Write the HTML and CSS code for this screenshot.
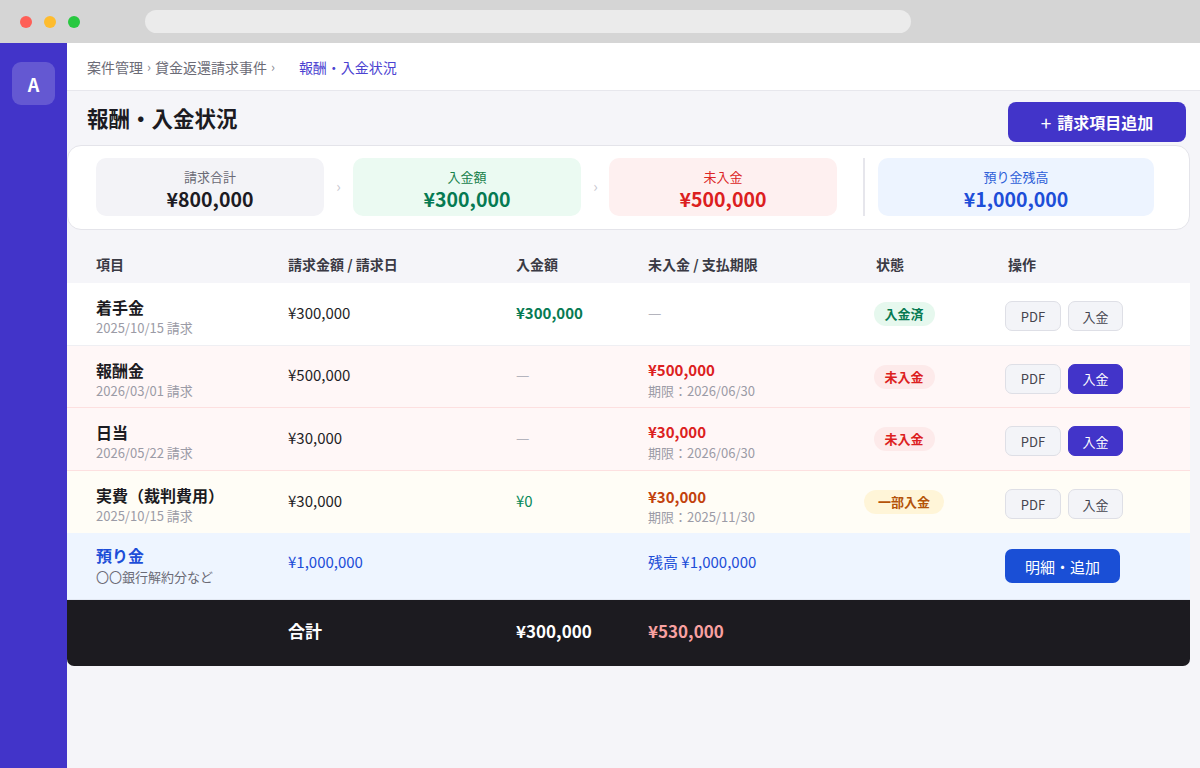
FILE: index.html
```html
<!DOCTYPE html>
<html lang="ja">
<head>
  <meta charset="UTF-8">
  <meta name="viewport" content="width=device-width, initial-scale=1.0">
  <title>報酬・入金状況</title>
  <link rel="stylesheet" href="styles.css">
</head>
<body>

<div class="window">
  <div class="chrome">
    <span class="dot red"></span>
    <span class="dot yellow"></span>
    <span class="dot green"></span>
    <div class="address"></div>
  </div>

  <div class="app">
    <aside class="sidebar">
      <div class="avatar">A</div>
    </aside>

    <main class="main">
      <nav class="crumbs">
        <span>案件管理</span><span class="sep">›</span>
        <span>貸金返還請求事件</span><span class="sep">›</span>
        <span class="current">報酬・入金状況</span>
      </nav>

      <div class="content">
        <div class="title-row">
          <h1>報酬・入金状況</h1>
          <button class="btn-add"><span class="plus">+</span>請求項目追加</button>
        </div>

        <div class="summary">
          <div class="tile gray">
            <div class="tile-label">請求合計</div>
            <div class="tile-value">¥800,000</div>
          </div>
          <div class="chev">›</div>
          <div class="tile green">
            <div class="tile-label">入金額</div>
            <div class="tile-value">¥300,000</div>
          </div>
          <div class="chev">›</div>
          <div class="tile red">
            <div class="tile-label">未入金</div>
            <div class="tile-value">¥500,000</div>
          </div>
          <div class="divider"></div>
          <div class="tile blue wide">
            <div class="tile-label">預り金残高</div>
            <div class="tile-value">¥1,000,000</div>
          </div>
        </div>

        <div class="table">
          <div class="tr th">
            <div>項目</div>
            <div>請求金額 / 請求日</div>
            <div>入金額</div>
            <div>未入金 / 支払期限</div>
            <div>状態</div>
            <div>操作</div>
          </div>

          <div class="tr paid">
            <div class="two">
              <div class="name">着手金</div>
              <div class="sub">2025/10/15 請求</div>
            </div>
            <div class="amt">¥300,000</div>
            <div class="amt ok-bold">¥300,000</div>
            <div class="amt dash">—</div>
            <div class="status"><span class="badge b-paid">入金済</span></div>
            <div class="actions">
              <button class="btn pdf">PDF</button>
              <button class="btn">入金</button>
            </div>
          </div>

          <div class="tr unpaid">
            <div class="two">
              <div class="name">報酬金</div>
              <div class="sub">2026/03/01 請求</div>
            </div>
            <div class="amt">¥500,000</div>
            <div class="amt dash">—</div>
            <div class="two">
              <div class="due red-txt">¥500,000</div>
              <div class="sub">期限：2026/06/30</div>
            </div>
            <div class="status"><span class="badge b-unpaid">未入金</span></div>
            <div class="actions">
              <button class="btn pdf">PDF</button>
              <button class="btn primary">入金</button>
            </div>
          </div>

          <div class="tr unpaid">
            <div class="two">
              <div class="name">日当</div>
              <div class="sub">2026/05/22 請求</div>
            </div>
            <div class="amt">¥30,000</div>
            <div class="amt dash">—</div>
            <div class="two">
              <div class="due red-txt">¥30,000</div>
              <div class="sub">期限：2026/06/30</div>
            </div>
            <div class="status"><span class="badge b-unpaid">未入金</span></div>
            <div class="actions">
              <button class="btn pdf">PDF</button>
              <button class="btn primary">入金</button>
            </div>
          </div>

          <div class="tr partial">
            <div class="two">
              <div class="name">実費（裁判費用）</div>
              <div class="sub">2025/10/15 請求</div>
            </div>
            <div class="amt">¥30,000</div>
            <div class="amt ok">¥0</div>
            <div class="two">
              <div class="due orange-txt">¥30,000</div>
              <div class="sub tight">期限：2025/11/30</div>
            </div>
            <div class="status"><span class="badge b-partial">一部入金</span></div>
            <div class="actions">
              <button class="btn pdf">PDF</button>
              <button class="btn">入金</button>
            </div>
          </div>

          <div class="tr deposit">
            <div class="two">
              <div class="name blue-txt">預り金</div>
              <div class="sub dark">〇〇銀行解約分など</div>
            </div>
            <div class="amt blue-txt">¥1,000,000</div>
            <div></div>
            <div class="amt blue-txt">残高 ¥1,000,000</div>
            <div></div>
            <div class="actions">
              <button class="btn-blue">明細・追加</button>
            </div>
          </div>

          <div class="tr total">
            <div></div>
            <div>合計</div>
            <div>¥300,000</div>
            <div class="pink-txt">¥530,000</div>
            <div></div>
            <div></div>
          </div>
        </div>
      </div>
    </main>
  </div>
</div>

</body>
</html>
```

FILE: styles.css
```css
* {
  box-sizing: border-box;
}
body {
  margin: 0;
  font-family: "Noto Sans CJK JP", "Noto Sans", sans-serif;
  color: #1c1b22;
  background: #f5f5f9;
}
button {
  font-family: inherit;
  cursor: pointer;
}

.window {
  width: 1200px;
  height: 768px;
  display: flex;
  flex-direction: column;
  overflow: hidden;
}

/* browser bar */
.chrome {
  height: 43px;
  background: #d5d5d5;
  display: flex;
  align-items: center;
  padding-left: 20px;
  flex-shrink: 0;
}
.dot {
  width: 12px;
  height: 12px;
  border-radius: 50%;
  margin-right: 12px;
}
.dot.red { background: #fe5f57; }
.dot.yellow { background: #febc2e; }
.dot.green { background: #28c840; }
.address {
  margin-left: 53px;
  width: 766px;
  height: 23px;
  border-radius: 12px;
  background: #ebebeb;
}

.app {
  flex: 1;
  display: flex;
}

.sidebar {
  width: 67px;
  background: #4234c9;
  padding: 19px 0 0 12px;
  flex-shrink: 0;
}
.avatar {
  width: 43px;
  height: 43px;
  border-radius: 9px;
  background: rgba(255, 255, 255, 0.18);
  color: #fff;
  font-weight: 700;
  font-size: 18px;
  display: flex;
  align-items: center;
  justify-content: center;
}

.main {
  flex: 1;
  background: #f5f5f9;
}

.crumbs {
  height: 48px;
  background: #fff;
  border-bottom: 1px solid #e7e7ed;
  display: flex;
  align-items: center;
  padding-left: 20px;
  font-size: 14px;
  color: #6b6b76;
}
.crumbs .sep {
  color: #8a8a94;
  margin: 0 4px;
  font-size: 13px;
}
.crumbs .current {
  color: #4b42d1;
  margin-left: 20px;
}

.content {
  padding-right: 10px;
}

.title-row {
  margin-top: 11px;
  height: 40px;
  display: flex;
  justify-content: space-between;
  align-items: flex-start;
  padding: 0 4px 0 20px;
}
.title-row h1 {
  margin: 0;
  font-size: 21.5px;
  line-height: 32px;
  font-weight: 700;
  color: #1c1b22;
}
.btn-add {
  height: 40px;
  width: 178px;
  border: none;
  border-radius: 8px;
  background: #4234c9;
  color: #fff;
  font-size: 16px;
  font-weight: 700;
  display: flex;
  align-items: center;
  justify-content: center;
}
.btn-add .plus {
  font-weight: 400;
  font-size: 19px;
  margin-right: 6px;
  line-height: 1;
}

/* summary */
.summary {
  margin-top: 3px;
  background: #fff;
  border: 1px solid #e4e4ea;
  border-radius: 14px;
  padding: 12px 0 13px 28px;
  display: flex;
  align-items: center;
}
.tile {
  width: 228px;
  height: 58px;
  border-radius: 10px;
  text-align: center;
  padding-top: 10px;
}
.tile.wide {
  width: 276px;
}
.tile-label {
  font-size: 13px;
  line-height: 18px;
}
.tile-value {
  font-size: 19.5px;
  line-height: 26px;
  font-weight: 700;
}
.tile.gray { background: #f3f3f7; }
.tile.gray .tile-label { color: #6b6b76; }
.tile.gray .tile-value { color: #1c1b22; }
.tile.green { background: #ebfaf2; }
.tile.green .tile-label { color: #16804a; }
.tile.green .tile-value { color: #067a52; }
.tile.red { background: #fef0f0; }
.tile.red .tile-label { color: #dc2626; }
.tile.red .tile-value { color: #dc2020; }
.tile.blue { background: #edf4ff; }
.tile.blue .tile-label { color: #2d5fd8; }
.tile.blue .tile-value { color: #1d4ed8; }
.chev {
  width: 29px;
  text-align: center;
  color: #c8c8d0;
  font-size: 15px;
  padding-bottom: 4px;
}
.chev + .tile.red {
  margin-left: -1px;
}
.divider {
  width: 2px;
  height: 58px;
  background: #e6e6ec;
  margin: 0 13px 0 26px;
}

/* table */
.table {
  margin-top: 15px;
}
.tr {
  display: grid;
  grid-template-columns: 192px 228px 132px 228px 132px 1fr;
  align-items: center;
  padding-left: 29px;
  height: 62px;
  border-bottom: 1px solid #efeff3;
  font-size: 15px;
}
.tr.th {
  height: 38px;
  border-bottom: none;
  font-size: 14px;
  font-weight: 700;
  color: #3a3a44;
}
.tr.paid {
  background: #fff;
  height: 63px;
}
.tr.unpaid {
  background: #fff7f7;
  border-bottom-color: #fde0e0;
}
.tr.unpaid + .tr.unpaid {
  height: 63px;
}
.tr.partial {
  background: #fffdf6;
  border-bottom: none;
}
.tr.deposit {
  background: #eef5ff;
  height: 67px;
  border-bottom: 1px solid #e2e8f2;
}
.tr.total {
  background: #1c1b20;
  color: #fff;
  height: 66px;
  border-bottom: none;
  border-radius: 0 0 7px 7px;
  font-size: 17px;
  font-weight: 700;
  padding-bottom: 6px;
}

.two {
  padding-top: 6px;
}
.name {
  font-size: 16px;
  line-height: 22px;
  font-weight: 700;
  color: #1c1b22;
}
.sub {
  font-size: 13px;
  line-height: 20px;
  color: #9b9ba6;
}
.sub.tight {
  line-height: 17px;
}
.sub.dark {
  color: #6b6b76;
  line-height: 22px;
}
.due {
  font-size: 15px;
  line-height: 22px;
  font-weight: 700;
}
.amt {
  color: #1f1f27;
  padding-bottom: 4px;
}
.deposit .two {
  padding-top: 0;
}
.deposit .amt {
  padding-bottom: 10px;
}
.dash {
  color: #b4b4bd;
}
.ok-bold {
  color: #067a52;
  font-weight: 700;
}
.ok {
  color: #0a8a5a;
}
.red-txt { color: #dc2020; }
.orange-txt { color: #c2410c; }
.blue-txt { color: #1d4ed8; }
.pink-txt { color: #f8a1a1; }

.status {
  width: 56px;
  display: flex;
  justify-content: center;
}
.badge {
  flex-shrink: 0;
  height: 24px;
  line-height: 24px;
  padding: 0 11px;
  border-radius: 12px;
  font-size: 13px;
  font-weight: 700;
  white-space: nowrap;
}
.b-paid { background: #e6f8ee; color: #067a52; }
.b-unpaid { background: #fdeaea; color: #dc2020; }
.b-partial { background: #fff5d8; color: #b45309; padding: 0 14px; }

.actions {
  display: flex;
  gap: 7px;
  margin-left: -3px;
  margin-top: 4px;
}
.deposit .actions {
  margin-top: 0;
}
.btn {
  height: 30px;
  width: 55px;
  padding: 0;
  border: 1px solid #dedfe6;
  border-radius: 7px;
  background: #f3f4f8;
  color: #45454f;
  font-size: 13px;
}
.btn.pdf {
  width: 56px;
}
.btn.primary {
  background: #4234c9;
  border-color: #4234c9;
  color: #fff;
}
.btn-blue {
  height: 34px;
  padding: 0 20px;
  border: none;
  border-radius: 7px;
  background: #1a4fd6;
  color: #fff;
  font-size: 15px;
}
```
